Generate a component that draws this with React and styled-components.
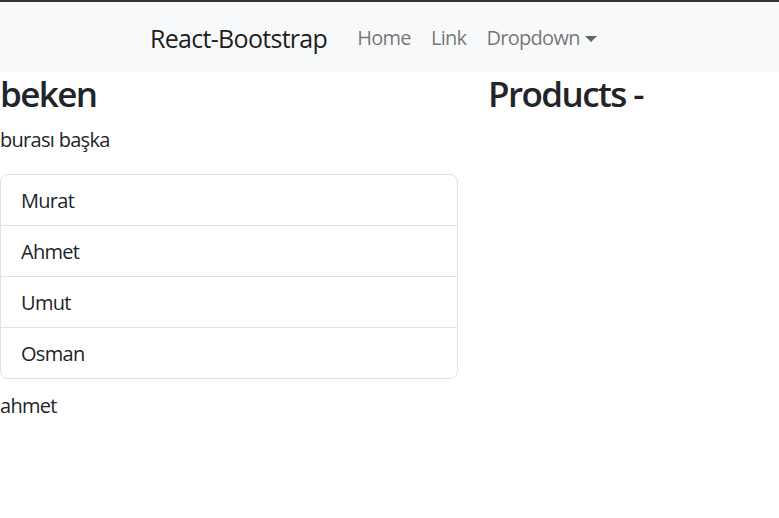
import React from 'react'
import styled, { createGlobalStyle } from 'styled-components'

const GlobalStyle = createGlobalStyle`
  html, body {
    margin: 0;
    padding: 0;
    background: #fff;
  }
  body {
    font-family: 'Open Sans', 'Noto Sans', sans-serif;
    font-size: 20px;
    line-height: 30px;
    letter-spacing: -0.035em;
    color: #212529;
  }
`

const TopEdge = styled.div`
  height: 2px;
  background: #333;
`

const NavBar = styled.nav`
  height: 70px;
  background: #f8f9fa;
  display: flex;
  align-items: center;
  padding-left: 150px;
  padding-top: 2px;
  box-sizing: border-box;
`

const Brand = styled.a`
  font-size: 25px;
  line-height: 36px;
  color: rgba(0, 0, 0, 0.9);
  margin-right: 20px;
  text-decoration: none;
`

const NavLink = styled.a`
  padding: 10px;
  color: rgba(0, 0, 0, 0.55);
  text-decoration: none;
  display: flex;
  align-items: center;
  ${(p) => p.$caret && `
    &::after {
      content: '';
      display: inline-block;
      margin-left: 5px;
      margin-top: 2px;
      border-top: 6px solid rgba(0, 0, 0, 0.6);
      border-left: 6px solid transparent;
      border-right: 6px solid transparent;
    }
  `}
`

const Row = styled.div`
  display: grid;
  grid-template-columns: 458px 1fr;
  column-gap: 30px;
`

const Col = styled.div``

const Title = styled.h1`
  margin: 0 0 10px;
  font-size: 35px;
  line-height: 43px;
  font-weight: 600;
  letter-spacing: -0.045em;
`

const Text = styled.p`
  margin: 0 0 ${(p) => p.$mb || 0}px;
  margin-top: ${(p) => p.$mt || 0}px;
`

const List = styled.ul`
  list-style: none;
  margin: 0;
  padding: 0;
  border: 1px solid #dee2e6;
  border-radius: 8px;
  overflow: hidden;
`

const Item = styled.li`
  padding: 11px 20px 9px;
  & + & {
    border-top: 1px solid #dee2e6;
  }
`

const names = ['Murat', 'Ahmet', 'Umut', 'Osman']

export default function App() {
  return (
    <>
      <GlobalStyle />
      <TopEdge />
      <NavBar>
        <Brand href='#'>React-Bootstrap</Brand>
        <NavLink href='#'>Home</NavLink>
        <NavLink href='#'>Link</NavLink>
        <NavLink href='#' $caret>Dropdown</NavLink>
      </NavBar>
      <Row>
        <Col>
          <Title>beken</Title>
          <Text $mb={19}>burası başka</Text>
          <List>
            {names.map((n) => (
              <Item key={n}>{n}</Item>
            ))}
          </List>
          <Text $mt={12}>ahmet</Text>
        </Col>
        <Col>
          <Title>Products -</Title>
        </Col>
      </Row>
    </>
  )
}
